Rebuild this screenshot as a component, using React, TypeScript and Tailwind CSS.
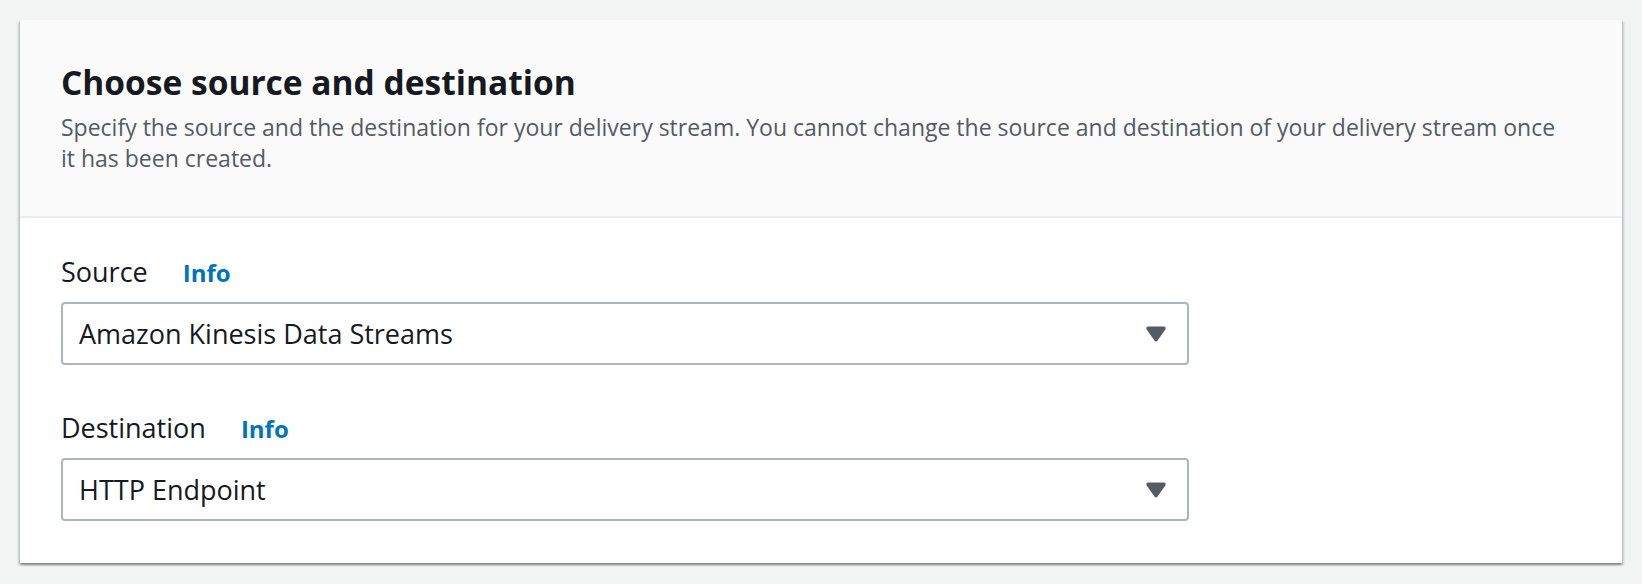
import * as React from "react"

function Caret() {
  return (
    <svg width="20" height="16" viewBox="0 0 20 16" className="shrink-0">
      <path
        d="M2.2 0.5 H17.8 C19.4 0.5 20.2 2.2 19.3 3.5 L11.4 14.8 C10.7 15.8 9.3 15.8 8.6 14.8 L0.7 3.5 C-0.2 2.2 0.6 0.5 2.2 0.5 Z"
        fill="#545b64"
      />
    </svg>
  )
}

function SelectField({ label, value, className }: { label: string; value: string; className?: string }) {
  return (
    <div className={className}>
      <div className="flex items-baseline h-[32px]">
        <span className="text-[27px] leading-[32px] text-[#16191f]">{label}</span>
        <a className="ml-[35px] text-[24px] leading-[32px] font-bold text-[#0073bb] cursor-pointer">Info</a>
      </div>
      <button
        type="button"
        className="mt-[14px] w-[1128px] h-[63px] flex items-center justify-between border-2 border-[#aab7b8] rounded-[4px] bg-white pl-[16px] pr-[21px] text-left"
      >
        <span className="text-[27px] leading-[32px] text-[#16191f]">{value}</span>
        <Caret />
      </button>
    </div>
  )
}

export default function App() {
  return (
    <div className="min-h-screen bg-[#f2f3f3] p-[20px] font-['Open_Sans',sans-serif]">
      <div className="bg-white shadow-[0_2px_2px_0_rgba(0,28,36,0.3),2px_2px_2px_0_rgba(0,28,36,0.15),-2px_2px_2px_0_rgba(0,28,36,0.15)]">
        {/* Header */}
        <div className="bg-[#fafafa] border-b-2 border-[#eaeded] pl-[41px] pr-[30px] pt-[42px] pb-[42px]">
          <h2 className="text-[33.5px] leading-[40px] font-bold text-[#16191f]">Choose source and destination</h2>
          <p className="mt-[10px] text-[23px] leading-[31px] text-[#545b64]">
            Specify the source and the destination for your delivery stream. You cannot change the source and destination of your delivery stream once
            <br />
            it has been created.
          </p>
        </div>

        {/* Body */}
        <div className="pl-[41px] pr-[40px] pt-[38px] pb-[42px]">
          <SelectField label="Source" value="Amazon Kinesis Data Streams" />
          <SelectField label="Destination" value="HTTP Endpoint" className="mt-[47px]" />
        </div>
      </div>
    </div>
  )
}
